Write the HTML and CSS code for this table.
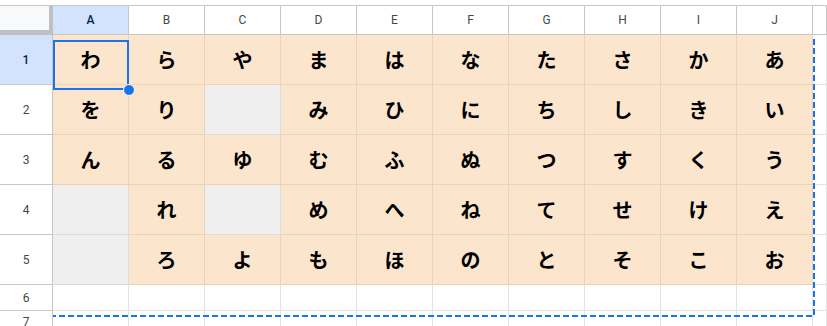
FILE: index.html
```html
<!DOCTYPE html>
<html lang="ja">
<head>
<meta charset="utf-8">
<title>Sheet</title>
<link rel="stylesheet" href="styles.css">
</head>
<body>
<div class="page">
  <div class="sheet">
    <div class="hd corner"></div>
    <div class="hd col sel">A</div>
    <div class="hd col">B</div>
    <div class="hd col">C</div>
    <div class="hd col">D</div>
    <div class="hd col">E</div>
    <div class="hd col">F</div>
    <div class="hd col">G</div>
    <div class="hd col">H</div>
    <div class="hd col">I</div>
    <div class="hd col">J</div>
    <div class="hd col"></div>

    <div class="rh sel">1</div>
    <div class="c p">わ</div><div class="c p">ら</div><div class="c p">や</div><div class="c p">ま</div><div class="c p">は</div><div class="c p">な</div><div class="c p">た</div><div class="c p">さ</div><div class="c p">か</div><div class="c p">あ</div><div class="c"></div>

    <div class="rh">2</div>
    <div class="c p">を</div><div class="c p">り</div><div class="c g"></div><div class="c p">み</div><div class="c p">ひ</div><div class="c p">に</div><div class="c p">ち</div><div class="c p">し</div><div class="c p">き</div><div class="c p">い</div><div class="c"></div>

    <div class="rh">3</div>
    <div class="c p">ん</div><div class="c p">る</div><div class="c p">ゆ</div><div class="c p">む</div><div class="c p">ふ</div><div class="c p">ぬ</div><div class="c p">つ</div><div class="c p">す</div><div class="c p">く</div><div class="c p">う</div><div class="c"></div>

    <div class="rh">4</div>
    <div class="c g"></div><div class="c p">れ</div><div class="c g"></div><div class="c p">め</div><div class="c p">へ</div><div class="c p">ね</div><div class="c p">て</div><div class="c p">せ</div><div class="c p">け</div><div class="c p">え</div><div class="c"></div>

    <div class="rh">5</div>
    <div class="c g"></div><div class="c p">ろ</div><div class="c p">よ</div><div class="c p">も</div><div class="c p">ほ</div><div class="c p">の</div><div class="c p">と</div><div class="c p">そ</div><div class="c p">こ</div><div class="c p">お</div><div class="c"></div>

    <div class="rh">6</div>
    <div class="c"></div><div class="c"></div><div class="c"></div><div class="c"></div><div class="c"></div><div class="c"></div><div class="c"></div><div class="c"></div><div class="c"></div><div class="c"></div><div class="c"></div>

    <div class="rh r7">7</div>
    <div class="c"></div><div class="c"></div><div class="c"></div><div class="c"></div><div class="c"></div><div class="c"></div><div class="c"></div><div class="c"></div><div class="c"></div><div class="c"></div><div class="c"></div>

    <svg class="copy" width="762" height="278" viewBox="0 0 762 278">
      <path d="M761 0 V277 H0" fill="none" stroke="#1a73e8" stroke-width="2" stroke-dasharray="6 3"/>
    </svg>
    <div class="active"><span class="handle"></span></div>
  </div>
</div>
</body>
</html>
```

FILE: styles.css
```css
html, body {
  margin: 0;
  padding: 0;
  background: #ffffff;
  overflow: hidden;
}

.page {
  padding-top: 5px;
  width: 827px;
  height: 321px;
}

.sheet {
  position: relative;
  display: grid;
  grid-template-columns: 53px repeat(10, 76px) 1fr;
  grid-template-rows: 30px repeat(5, 50px) 26px 1fr;
  height: 321px;
  overflow: hidden;
}

.hd, .rh, .c {
  box-sizing: border-box;
  display: flex;
  align-items: center;
  justify-content: center;
}

.hd {
  border-top: 1px solid #c4c7c5;
  border-right: 1px solid #c4c7c5;
  border-bottom: 1px solid #c4c7c5;
  background: #ffffff;
  font-family: Roboto, "Liberation Sans", Arial, sans-serif;
  font-size: 12px;
  color: #444746;
}

.hd.corner {
  background: #f8f9fa;
  border-right: 4px solid #c0c0c0;
  border-bottom: 5px solid #c0c0c0;
}

.hd.sel {
  background: #d3e3fd;
  color: #041e49;
  font-weight: 500;
}

.rh {
  border-right: 1px solid #c4c7c5;
  border-bottom: 1px solid #c4c7c5;
  background: #ffffff;
  font-family: Roboto, "Liberation Sans", Arial, sans-serif;
  font-size: 12px;
  color: #444746;
}

.rh.r7 {
  align-items: flex-start;
  padding-top: 4px;
}

.rh.sel {
  background: #d3e3fd;
  color: #041e49;
  font-weight: 500;
}

.c {
  border-right: 1px solid #e2e3e3;
  border-bottom: 1px solid #e2e3e3;
  background: #ffffff;
  font-family: "Noto Sans CJK JP", "Noto Sans", sans-serif;
  font-weight: 700;
  font-size: 20px;
  color: #000000;
}

.c.p {
  background: #fce5cd;
  border-right-color: #ebd2b8;
  border-bottom-color: #ebd2b8;
}

.c.g {
  background: #efefef;
  border-right-color: #dcdcdc;
  border-bottom-color: #dcdcdc;
}

.copy {
  position: absolute;
  left: 53px;
  top: 34px;
}

.active {
  position: absolute;
  left: 53px;
  top: 35px;
  width: 76px;
  height: 50px;
  box-sizing: border-box;
  border: 2px solid #1a73e8;
}

.handle {
  position: absolute;
  right: -8px;
  bottom: -8px;
  width: 10px;
  height: 10px;
  border-radius: 50%;
  background: #1a73e8;
  border: 1px solid #ffffff;
}
```
